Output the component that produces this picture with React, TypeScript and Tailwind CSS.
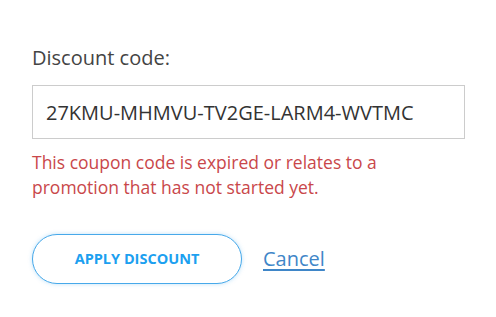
import React, { useState } from 'react';

const App: React.FC = () => {
  const [code, setCode] = useState('27KMU-MHMVU-TV2GE-LARM4-WVTMC');

  return (
    <div className="w-[496px] h-[317px] bg-white pl-8 pr-[31px] pt-[44px]" style={{ fontFamily: '"Open Sans", sans-serif' }}>
      <label htmlFor="discount" className="block text-[20px] leading-[28px] text-[#444]">
        Discount code:
      </label>

      <input
        id="discount"
        value={code}
        onChange={e => setCode(e.target.value)}
        className="mt-[13px] block w-[433px] h-[54px] border border-[#cccccc] px-[13px] text-[20px] text-[#333] outline-none"
      />

      <p className="mt-[11px] text-[17.5px] leading-[25px] text-[#c9474a]">
        This coupon code is expired or relates to a
        <br />
        promotion that has not started yet.
      </p>

      <div className="mt-[34px] flex items-center gap-[21px]">
        <button className="w-[210px] h-[50px] rounded-full border border-[#47a9ea] bg-white text-[14.5px] font-bold text-[#1ca0f0] shadow-[0_0_4px_rgba(71,169,234,0.35)]">
          APPLY DISCOUNT
        </button>
        <a href="#" className="text-[20px] text-[#3f86c8] underline underline-offset-[3px]">
          Cancel
        </a>
      </div>
    </div>
  );
};

export default App;
